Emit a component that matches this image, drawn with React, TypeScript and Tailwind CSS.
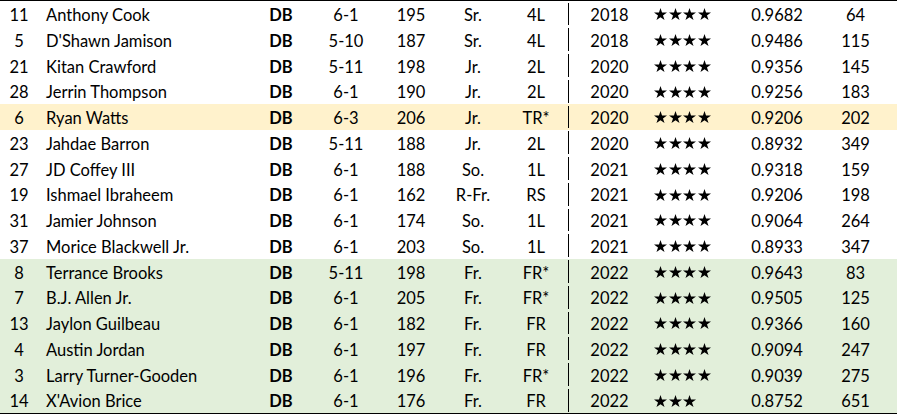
const ROWS = [
  { n: '11', name: 'Anthony Cook', ht: '6-1', wt: '195', cls: 'Sr.', st: '4L', yr: '2018', stars: 4, rating: '0.9682', rank: '64', bg: '' },
  { n: '5', name: "D'Shawn Jamison", ht: '5-10', wt: '187', cls: 'Sr.', st: '4L', yr: '2018', stars: 4, rating: '0.9486', rank: '115', bg: '' },
  { n: '21', name: 'Kitan Crawford', ht: '5-11', wt: '198', cls: 'Jr.', st: '2L', yr: '2020', stars: 4, rating: '0.9356', rank: '145', bg: '' },
  { n: '28', name: 'Jerrin Thompson', ht: '6-1', wt: '190', cls: 'Jr.', st: '2L', yr: '2020', stars: 4, rating: '0.9256', rank: '183', bg: '' },
  { n: '6', name: 'Ryan Watts', ht: '6-3', wt: '206', cls: 'Jr.', st: 'TR*', yr: '2020', stars: 4, rating: '0.9206', rank: '202', bg: 'yellow' },
  { n: '23', name: 'Jahdae Barron', ht: '5-11', wt: '188', cls: 'Jr.', st: '2L', yr: '2020', stars: 4, rating: '0.8932', rank: '349', bg: '' },
  { n: '27', name: 'JD Coffey III', ht: '6-1', wt: '188', cls: 'So.', st: '1L', yr: '2021', stars: 4, rating: '0.9318', rank: '159', bg: '' },
  { n: '19', name: 'Ishmael Ibraheem', ht: '6-1', wt: '162', cls: 'R-Fr.', st: 'RS', yr: '2021', stars: 4, rating: '0.9206', rank: '198', bg: '' },
  { n: '31', name: 'Jamier Johnson', ht: '6-1', wt: '174', cls: 'So.', st: '1L', yr: '2021', stars: 4, rating: '0.9064', rank: '264', bg: '' },
  { n: '37', name: 'Morice Blackwell Jr.', ht: '6-1', wt: '203', cls: 'So.', st: '1L', yr: '2021', stars: 4, rating: '0.8933', rank: '347', bg: '' },
  { n: '8', name: 'Terrance Brooks', ht: '5-11', wt: '198', cls: 'Fr.', st: 'FR*', yr: '2022', stars: 4, rating: '0.9643', rank: '83', bg: 'green' },
  { n: '7', name: 'B.J. Allen Jr.', ht: '6-1', wt: '205', cls: 'Fr.', st: 'FR*', yr: '2022', stars: 4, rating: '0.9505', rank: '125', bg: 'green' },
  { n: '13', name: 'Jaylon Guilbeau', ht: '6-1', wt: '182', cls: 'Fr.', st: 'FR', yr: '2022', stars: 4, rating: '0.9366', rank: '160', bg: 'green' },
  { n: '4', name: 'Austin Jordan', ht: '6-1', wt: '197', cls: 'Fr.', st: 'FR', yr: '2022', stars: 4, rating: '0.9094', rank: '247', bg: 'green' },
  { n: '3', name: 'Larry Turner-Gooden', ht: '6-1', wt: '196', cls: 'Fr.', st: 'FR*', yr: '2022', stars: 4, rating: '0.9039', rank: '275', bg: 'green' },
  { n: '14', name: "X'Avion Brice", ht: '6-1', wt: '176', cls: 'Fr.', st: 'FR', yr: '2022', stars: 3, rating: '0.8752', rank: '651', bg: 'green' },
];

function Star() {
  return (
    <svg width="13" height="12" viewBox="0 0 24 22" className="shrink-0">
      <path d="M12 0l2.8 8.3H24l-7.4 5.4 2.8 8.3L12 16.9 4.6 22l2.8-8.3L0 8.3h9.2z" fill="#000" />
    </svg>
  );
}

export default function App() {
  return (
    <div className="w-[897px] h-[415px] bg-white text-black" style={{ fontFamily: 'Lato, "Open Sans", sans-serif' }}>
      <div className="border-t border-b border-black">
        {ROWS.map((r, i) => (
          <div
            key={i}
            className={`flex h-[25.75px] items-center text-[16.5px] leading-none pt-[3px] ${
              r.bg === 'yellow' ? 'bg-[#fff2cc]' : r.bg === 'green' ? 'bg-[#e2efda]' : 'bg-white'
            }`}
          >
            <div className="w-[38px] text-center">{r.n}</div>
            <div className="w-[212px] pl-[8px] whitespace-nowrap">{r.name}</div>
            <div className="w-[62px] text-center font-bold">DB</div>
            <div className="w-[68px] text-center">{r.ht}</div>
            <div className="w-[62px] text-center">{r.wt}</div>
            <div className="w-[62px] text-center">{r.cls}</div>
            <div className="w-[65px] h-full flex items-center justify-center border-r border-black -mt-[3px] pt-[3px]">{r.st}</div>
            <div className="w-[81px] text-center">{r.yr}</div>
            <div className="w-[90px] pl-[4px] flex gap-[1.5px] -mt-[2px]">
              {Array.from({ length: r.stars }).map((_, k) => (
                <Star key={k} />
              ))}
            </div>
            <div className="w-[74px] text-center">{r.rating}</div>
            <div className="w-[83px] text-center">{r.rank}</div>
          </div>
        ))}
      </div>
    </div>
  );
}
